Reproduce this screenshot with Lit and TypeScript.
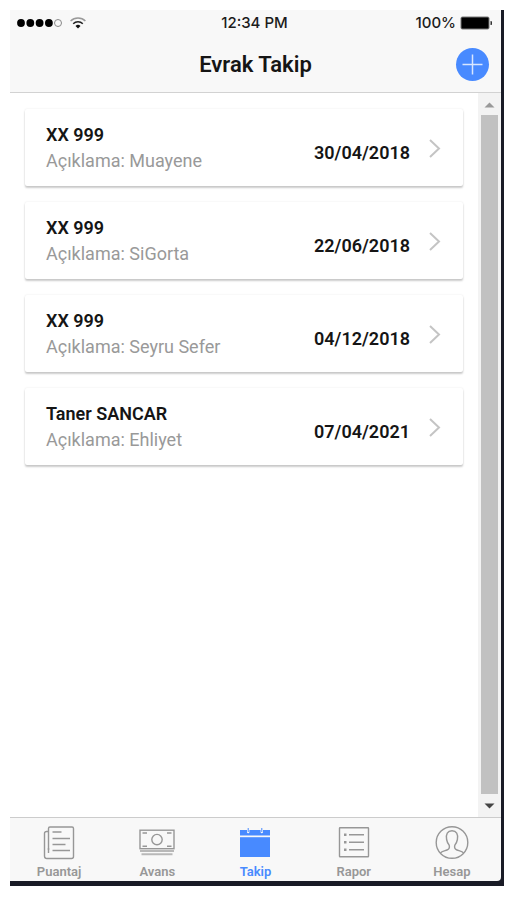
import { LitElement, html, css, svg } from "lit";
import { customElement, property, state } from "lit/decorators.js";
import { classMap } from "lit/directives/class-map.js";

interface DocumentRecord {
  owner: string;
  note: string;
  due: string;
}

const documents: DocumentRecord[] = [
  { owner: "XX 999", note: "Muayene", due: "30/04/2018" },
  { owner: "XX 999", note: "SiGorta", due: "22/06/2018" },
  { owner: "XX 999", note: "Seyru Sefer", due: "04/12/2018" },
  { owner: "Taner SANCAR", note: "Ehliyet", due: "07/04/2021" },
];

const paperIcon = svg`
  <path d="M6.500 24V2.500a1.500 1.500 0 0 1 1.500-1.500h22a1.500 1.500 0 0 1 1.500 1.500v28a2 2 0 0 1-2 2H5a2.500 2.500 0 0 1-2.500-2.500V7.500a2 2 0 0 1 2-2h2"/>
  <path d="M6.500 22v5"/>
  <path d="M10.500 6h9M10.500 12.500h17.500M10.500 18.500h13M10.500 24.500h17.500"/>`;

const cashIcon = svg`
  <rect x="0" y="4.200" width="34" height="18.500"/>
  <circle cx="17" cy="13.600" r="5.200"/>
  <path d="M2.500 7H7M27 7h4.500M2.500 20.200H7M27 20.200h4.500"/>
  <path d="M0 25h34M1.500 28.200h31" class="edge"/>`;

const calendarIcon = svg`
  <path class="solid" d="M2 4h7v2a1.200 1.200 0 0 0 2.400 0V4h11.200v2a1.200 1.200 0 0 0 2.400 0V4h7v5.600H2z"/>
  <path class="solid" d="M2 11.200h30V31H2z"/>
  <path class="thin" d="M10.200 2v4M23.800 2v4"/>`;

const listIcon = svg`
  <rect x="2.500" y="1.800" width="29" height="29" rx=".5"/>
  <path d="M12 8.800h15M12 16.300h15M12 23.800h15"/>
  <path class="solid" d="M7 7.500h2.500V10H7zM7 15h2.500v2.500H7zM7 22.500h2.500V25H7z"/>`;

const personIcon = svg`
  <circle cx="17" cy="16.500" r="15.800"/>
  <path d="M5.500 27C6.500 25.200 10 24.800 12 24c2.200-.9 2.800-2.600 2.200-4.800C12.600 17.500 12 15.500 11.600 13.500 10.700 8 12.500 4.800 17 4.800S23.300 8 22.400 13.500C22 15.500 21.400 17.500 19.800 19.200c-.6 2.200 0 3.900 2.200 4.800 2 .8 5.500 1.200 6.500 3"/>`;

const tabs = [
  { label: "Puantaj", icon: paperIcon },
  { label: "Avans", icon: cashIcon },
  { label: "Takip", icon: calendarIcon },
  { label: "Rapor", icon: listIcon },
  { label: "Hesap", icon: personIcon },
];

@customElement("status-bar")
class StatusBar extends LitElement {
  static styles = css`
    :host {
      display: grid;
      grid-template-columns: 1fr auto 1fr;
      align-items: center;
      height: 26px;
      padding: 0 9px 0 7px;
      font: 500 15px/20px Inter, Roboto, sans-serif;
      color: #1c1c1c;
    }
    .signal {
      display: flex;
      align-items: center;
      gap: 7px;
    }
    .battery {
      display: flex;
      align-items: center;
      justify-content: flex-end;
      gap: 4px;
    }
    svg {
      display: block;
    }
  `;

  render() {
    return html`
      <div class="signal">
        <svg width="46" height="10" viewBox="0 0 46 10" aria-hidden="true">
          <circle cx="4" cy="5" r="3.900" />
          <circle cx="13.300" cy="5" r="3.900" />
          <circle cx="22.600" cy="5" r="3.900" />
          <circle cx="31.900" cy="5" r="3.900" />
          <circle cx="41" cy="5" r="3.500" fill="none" stroke="#888" />
        </svg>
        <svg width="16" height="12" viewBox="0 0 16 12" fill="none" stroke-width="1.500" aria-hidden="true">
          <path d="M.6 4a10.500 10.500 0 0 1 14.800 0" stroke="#999" />
          <path d="M3.200 6.700a6.800 6.800 0 0 1 9.600 0" stroke="#222" />
          <path d="M8 11.500 5.500 9a3.700 3.700 0 0 1 5 0z" fill="#111" />
        </svg>
      </div>
      <span>12:34 PM</span>
      <div class="battery">
        <span>100%</span>
        <svg width="32" height="14" viewBox="0 0 32 14" aria-hidden="true">
          <rect x=".5" y=".5" width="29" height="13" rx="2" fill="#777" />
          <rect x="1.500" y="1.500" width="27" height="11" rx="1" />
          <path d="M30.500 5a2 2 0 0 1 0 4z" fill="#333" />
        </svg>
      </div>
    `;
  }
}

@customElement("document-card")
class DocumentCard extends LitElement {
  @property({ attribute: false }) record!: DocumentRecord;

  static styles = css`
    :host {
      display: block;
    }
    .card {
      display: flex;
      align-items: center;
      box-sizing: border-box;
      min-height: 77px;
      padding: 12px 22px 12px 21px;
      border-radius: 2px;
      background: #fff;
      box-shadow: 0 2px 2px rgba(0, 0, 0, 0.2), 0 0 2px rgba(0, 0, 0, 0.1);
      color: #151515;
      text-decoration: none;
      font: 400 18px/26px Roboto, sans-serif;
    }
    .text {
      flex: 1;
      min-width: 0;
    }
    .owner,
    .note {
      margin: 0;
      font-size: 18px;
    }
    .owner,
    .due {
      font-weight: 600;
    }
    .note {
      color: #999;
    }
    .due {
      padding-top: 10px;
    }
    .chevron {
      margin-left: 19px;
      fill: none;
      stroke: #c4c4c4;
      stroke-width: 2;
    }
  `;

  render() {
    return html`
      <a class="card" href="#">
        <div class="text">
          <h2 class="owner">${this.record.owner}</h2>
          <p class="note">Açıklama: ${this.record.note}</p>
        </div>
        <time class="due">${this.record.due}</time>
        <svg class="chevron" width="12" height="20" viewBox="0 0 12 20" aria-hidden="true">
          <path d="m1 2 9 8.500L1 19" />
        </svg>
      </a>
    `;
  }
}

@customElement("tab-bar")
class TabBar extends LitElement {
  @state() private active = "Takip";

  static styles = css`
    nav {
      display: grid;
      grid-template-columns: repeat(5, 1fr);
      border-top: 1px solid #ccc;
      border-bottom-right-radius: 4px;
      background: #f8f8f8;
    }
    button {
      display: flex;
      flex-direction: column;
      align-items: center;
      gap: 4px;
      height: 63px;
      padding: 8px 0 0;
      border: 0;
      background: none;
      color: #979797;
      font: 600 13px/16px Roboto, sans-serif;
    }
    .active {
      color: #488aff;
    }
    svg {
      overflow: visible;
      fill: none;
      stroke: currentColor;
      stroke-width: 1.4;
    }
    .solid {
      fill: currentColor;
      stroke: none;
    }
    .thin {
      stroke-width: 1;
    }
    .edge {
      stroke: #b8b8b8;
      stroke-width: 2;
    }
  `;

  render() {
    return html`
      <nav>
        ${tabs.map(
          (tab) => html`
            <button
              type="button"
              class=${classMap({ active: tab.label === this.active })}
              @click=${() => (this.active = tab.label)}
            >
              <svg width="34" height="34" viewBox="0 0 34 34" aria-hidden="true">${tab.icon}</svg>
              <span>${tab.label}</span>
            </button>
          `
        )}
      </nav>
    `;
  }
}

@customElement("app-root")
class AppRoot extends LitElement {
  static styles = css`
    :host {
      display: flex;
      box-sizing: border-box;
      min-height: 100vh;
      padding: 10px 3px 14px 10px;
      background: #fff;
      font-family: Roboto, sans-serif;
    }
    .phone {
      flex: 1;
      min-width: 0;
      display: flex;
      flex-direction: column;
      padding: 0 3px 5px 0;
      background: #191b26;
    }
    header {
      background: #f8f8f8;
      border-bottom: 1px solid #d2d2d2;
    }
    .toolbar {
      display: grid;
      grid-template-columns: 1fr auto 1fr;
      align-items: center;
      height: 56px;
      padding: 0 12px;
    }
    h1 {
      grid-column: 2;
      margin: 0;
      padding-top: 2px;
      font: 600 22px/28px Roboto, sans-serif;
      color: #151515;
    }
    .add {
      justify-self: end;
      width: 33px;
      height: 33px;
      padding: 0;
      border: 0;
      border-radius: 50%;
      background: #488aff;
    }
    .add svg {
      display: block;
      stroke: #d8e6ff;
      stroke-width: 1.5;
    }
    .body {
      flex: 1;
      display: flex;
      background: #fff;
    }
    main {
      flex: 1;
      min-width: 0;
      display: flex;
      flex-direction: column;
      gap: 16px;
      padding: 16px 15px;
    }
    .scrollbar {
      display: flex;
      flex-direction: column;
      align-items: center;
      width: 17px;
      padding: 0 3px;
      background: #f3f3f3;
    }
    .arrow {
      display: block;
      fill: #999;
    }
    .down {
      fill: #444;
    }
    .thumb {
      flex: 1;
      align-self: stretch;
      background: #c1c1c1;
    }
  `;

  render() {
    return html`
      <div class="phone">
        <header>
          <status-bar></status-bar>
          <div class="toolbar">
            <h1>Evrak Takip</h1>
            <button class="add" type="button" aria-label="Ekle">
              <svg width="33" height="33" viewBox="0 0 33 33"><path d="M16.500 6.500v20M6.500 16.500h20" /></svg>
            </button>
          </div>
        </header>
        <div class="body">
          <main>
            ${documents.map((record) => html`<document-card .record=${record}></document-card>`)}
          </main>
          <div class="scrollbar" aria-hidden="true">
            <svg class="arrow" width="17" height="22" viewBox="0 0 17 22"><path d="m3.500 14.500 5-5 5 5z" /></svg>
            <div class="thumb"></div>
            <svg class="arrow down" width="17" height="23" viewBox="0 0 17 23"><path d="m3.500 9.500 5 5 5-5z" /></svg>
          </div>
        </div>
        <tab-bar></tab-bar>
      </div>
    `;
  }
}
